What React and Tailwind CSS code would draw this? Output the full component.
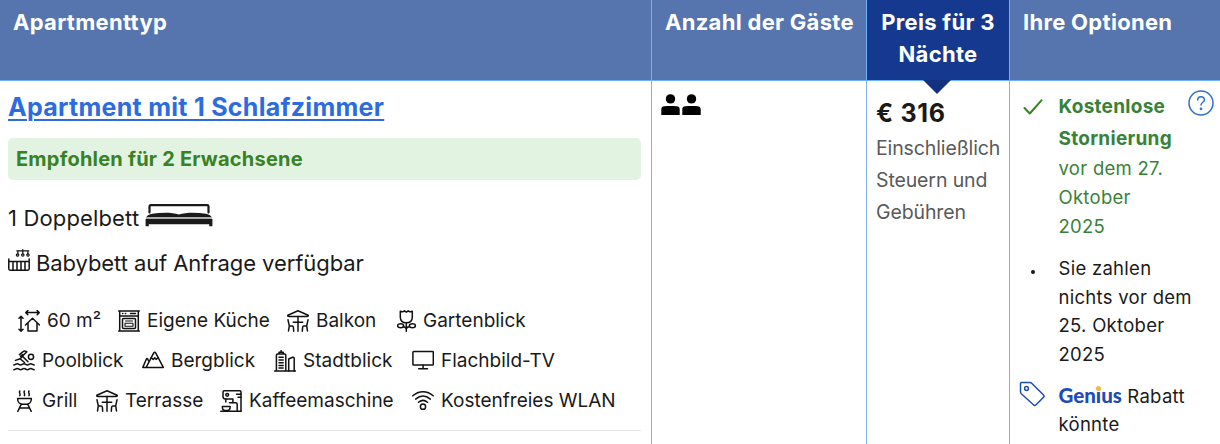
import clsx from 'clsx';

const Icon = ({ children, className }) => (
  <svg
    viewBox="0 0 22 22"
    className={clsx('h-[22px] w-[22px] shrink-0', className)}
    fill="none"
    stroke="#111"
    strokeWidth="1.5"
    strokeLinecap="round"
    strokeLinejoin="round"
  >
    {children}
  </svg>
);

const SizeIcon = () => (
  <Icon>
    <path d="M8 2.500h13M9.800.6l-2 2 2 2M19.200.6l2 2-2 2M3 6.500v14.500M1 8.300l2-2 2 2M1 19.200l2 2 2-2" />
    <path d="M7.500 15l7-6.700 7 6.700M10 13v8h9v-8" />
  </Icon>
);

const KitchenIcon = () => (
  <Icon>
    <path d="M.7.9h20.600M1.700 1v20M20.300 1v20M.7 21.100h20.600M1.700 6h18.600" />
    <path d="M4.600 3.400h.3M7.400 3.400h.3M12.500 3.400h5" />
    <rect x="4.500" y="8.400" width="13" height="10.200" rx="1" />
    <path d="M7.500 11h7M7 13.300h8v3H7z" strokeWidth="1.100" />
  </Icon>
);

const TerraceIcon = () => (
  <Icon>
    <path d="M11 .8L.9 5.200c-.5 1 .2 1.200 1 1.200h18.200c.8 0 1.500-.2 1-1.200z" />
    <path d="M11 6.500v14.700M6.300 12.200h9.400" />
    <path d="M1 9.800l1.300 6.100L1.500 21M2.300 15.900h3c.8 0 1 .7 1.100 1.500l.3 3.800M21 9.800l-1.300 6.100.8 5.100M19.700 15.900h-3c-.8 0-1 .7-1.100 1.500l-.3 3.800" />
  </Icon>
);

const TulipIcon = () => (
  <Icon>
    <path d="M3.300 1.200c1 .7 2 .8 3 .3L7.400.8 9.300 2.200 11.200.8l1.100.7c1 .5 2 .4 3-.3v5.700c0 3.800-2.500 5.800-6 5.800s-6-2-6-5.800zM9.300 12.700v8.600" />
    <ellipse cx="3.600" cy="15.800" rx="3" ry="2" />
    <ellipse cx="15.400" cy="15.800" rx="3" ry="2" />
    <path d="M6.300 16.700c1.500 0 2.400.7 3 2 .6-1.300 1.500-2 3-2" />
  </Icon>
);

const PoolIcon = () => (
  <Icon>
    <circle cx="18" cy="6.800" r="2.600" />
    <path d="M6.500 4.600l3.300-2.700c1-.8 2.200-1 3.300-.5l.8.4-4.600 4.300 5.700 5.600M7.600 6.200l2-1.600M2.500 10.400l4.600-1.700 4.400 3.800M6.800 8.800l1.800-1.500" />
    <path d="M.8 15c1.700 0 1.700-1.300 3.400-1.300S5.900 15 7.600 15s1.700-1.300 3.400-1.300S12.700 15 14.400 15s1.700-1.300 3.400-1.300S19.500 15 21.200 15M.8 19.700c1.700 0 1.700-1.300 3.400-1.300s1.700 1.300 3.400 1.300 1.700-1.300 3.400-1.300 1.700 1.300 3.400 1.300 1.700-1.300 3.400-1.300 1.700 1.300 3.400 1.300" />
  </Icon>
);

const MountainIcon = () => (
  <Icon>
    <path d="M.8 17.400h20.500L13.800 3.100c-.6-1-1.600-1-2.200 0L4.300 17.200M.8 17.400l3.500-8.200c.5-.9 1-.9 1.500 0l.8 1.800" />
    <path d="M9.300 7.800l2 1.600 1.500-1.600 1.300 1.600 1.900-1.600" />
  </Icon>
);

const CityIcon = () => (
  <Icon>
    <path d="M.6 21h20.800M2.400 21V5.300c0-.9.5-1.400 1.300-1.400h6.800c.8 0 1.300.5 1.300 1.400V21M5 3.700V2.300h4.200v1.400M7.100 2V.7" />
    <path d="M14.700 21V9l4-1.700c.9-.3 1.500 0 1.500 1V21" />
    <path d="M5 7.300h4.200M5 10h4.200M5 12.700h4.200M5 15.400h4.200M5 18.100h4.200" />
  </Icon>
);

const TvIcon = () => (
  <Icon>
    <rect x=".9" y="1.500" width="20.400" height="13.500" rx=".8" />
    <path d="M11.100 15.300v3.500M6.700 18.800h8.800" />
  </Icon>
);

const GrillIcon = () => (
  <Icon>
    <path d="M3.800 1c-1.200 1.700 1 2.600 0 4.600M8.400 1c-1.200 1.700 1 2.600 0 4.600M13 1c-1.200 1.700 1 2.600 0 4.600" />
    <path d="M1.600 8.600h13.800c0 3.200-1.900 5.600-4.800 5.600H6.400c-2.900 0-4.800-2.400-4.800-5.600zM5.200 14.300L1.800 21.300M11.800 14.300l3.400 7M3.600 18h9.800" />
  </Icon>
);

const CoffeeIcon = () => (
  <Icon>
    <path d="M21 21.200V2c0-.8-.4-1.200-1.200-1.200H4.200C3.400.8 3 1.200 3 2v4.500c0 1.600.8 2.400 2.300 2.400h7.600v3.600" />
    <circle cx="7.200" cy="4.800" r="1.400" />
    <path d="M16.500 4.200H21M18 7.200h3M.8 21.200H21M9.500 12.700h6.200c1 0 1.500.5 1.500 1.500v7M5.800 9v3" />
    <path d="M2.300 16.600h7.900c0 2.600-1 4-2.900 4H5.200c-1.900 0-2.900-1.400-2.900-4z" />
  </Icon>
);

const WifiIcon = () => (
  <Icon>
    <path d="M.8 5.800c6-5.500 14.400-5.500 20.400 0M3.700 9.100c4.500-4 10.100-4 14.600 0M6.500 12.300c2.900-2.500 6.100-2.500 9 0" />
    <circle cx="11" cy="16.700" r="2.600" />
  </Icon>
);

const BedIcon = () => (
  <svg viewBox="0 0 68 23" className="h-[23px] w-[68px] shrink-0" fill="#1a1a1a">
    <path d="M4.500 8.500V2.400c0-.7.500-1.200 1.200-1.200h56.600c.7 0 1.200.5 1.200 1.200v6.100" fill="none" stroke="#1a1a1a" strokeWidth="2.200" strokeLinecap="round" />
    <path d="M1.300 13.200c.8-1.600 3-2.900 6-3.500 9-1.400 20-1.400 26.700.7 6.700-2.100 17.700-2.100 26.700-.7 3 .6 5.200 1.900 6 3.500z" />
    <path d="M.6 15h66.800v7.200h-3.200v-2H3.800v2H.6z" />
    <path d="M1 14.100h66" stroke="#aaa" strokeWidth="1.600" />
  </svg>
);

const CribIcon = () => (
  <Icon>
    <path d="M.8 10v9.800c0 .9.500 1.400 1.400 1.400h17.600c.9 0 1.400-.5 1.400-1.400V10M.8 12.500h20.400M5 12.500v8.500M9 12.500v8.500M13 12.500v8.500M17 12.500v8.500" />
    <path d="M8.800 1.800h12M14.800.6v4M9.800 2v3M19.900 2v3" strokeWidth="1.200" />
    <circle cx="9.600" cy="6" r="1.200" strokeWidth="1.200" />
    <circle cx="14.800" cy="6" r="1.200" strokeWidth="1.200" />
    <circle cx="20" cy="6" r="1.200" strokeWidth="1.200" />
  </Icon>
);

const Person = () => (
  <svg viewBox="0 0 19 21" className="h-[21px] w-[19px]">
    <circle cx="9.500" cy="4.900" r="4.700" />
    <path d="M.3 21v-5.500c0-2.300 1.200-3 3.100-3.200 4-.5 8.200-.5 12.200 0 1.900.2 3.100.9 3.100 3.200V21z" />
  </svg>
);

const AMENITIES = [
  [
    { icon: SizeIcon, label: '60 m²', width: 'w-[100px]' },
    { icon: KitchenIcon, label: 'Eigene Küche', width: 'w-[169px]' },
    { icon: TerraceIcon, label: 'Balkon', width: 'w-[110px]' },
    { icon: TulipIcon, label: 'Gartenblick', width: 'w-[140px]', gap: 'gap-[4px]' },
  ],
  [
    { icon: PoolIcon, label: 'Poolblick', width: 'w-[129px]' },
    { icon: MountainIcon, label: 'Bergblick', width: 'w-[132px]' },
    { icon: CityIcon, label: 'Stadtblick', width: 'w-[138px]' },
    { icon: TvIcon, label: 'Flachbild-TV', width: 'w-[150px]' },
  ],
  [
    { icon: GrillIcon, label: 'Grill', width: 'w-[80px]', gap: 'gap-[4px]' },
    { icon: TerraceIcon, label: 'Terrasse', width: 'w-[124px]' },
    { icon: CoffeeIcon, label: 'Kaffeemaschine', width: 'w-[192px]' },
    { icon: WifiIcon, label: 'Kostenfreies WLAN', width: 'w-[210px]' },
  ],
];

const ROW_INDENT = ['pl-[10px]', 'pl-[5px]', 'pl-[8px]'];

const HeaderCell = ({ children, className }) => (
  <div
    className={clsx(
      'h-[81px] border-b border-[#6cb2f9] pt-[6px] text-[22px] leading-8 font-bold tracking-[0.3px] whitespace-nowrap text-white',
      className
    )}
  >
    {children}
  </div>
);

const RoomCell = () => (
  <div className="border-r border-[#80b2ee] pr-[10px] pl-2">
    <div className="pt-[9px] text-[25px] leading-[34px] font-bold tracking-[0.28px] text-[#2d6be0]">
      <a href="#" className="underline decoration-2 underline-offset-[3px]">
        Apartment mit 1 Schlafzimmer
      </a>
    </div>
    <div className="mt-[14px] h-[42px] rounded-[5px] bg-[#e2f3e1] pl-2 text-[20px] leading-[42px] font-bold tracking-[0.22px] text-[#388225]">
      Empfohlen für 2 Erwachsene
    </div>
    <div className="mt-[22px] flex h-8 items-center text-[22px] text-[#1a1a1a]">
      <span className="w-[137px] tracking-[0.15px] whitespace-nowrap">1 Doppelbett</span>
      <span className="-mt-[5px]">
        <BedIcon />
      </span>
    </div>
    <div className="mt-[13px] flex h-8 items-center gap-[6px] text-[22px] text-[#1a1a1a]">
      <span className="-mt-[6px]">
        <CribIcon />
      </span>
      <span className="tracking-[-0.08px]">Babybett auf Anfrage verfügbar</span>
    </div>
    <div className="mt-[22px] border-b border-[#e4e4e4] pb-[9px]">
      {AMENITIES.map((row, i) => (
        <div key={i} className={clsx('flex h-10 items-center', ROW_INDENT[i])}>
          {row.map(({ icon: Glyph, label, width, gap = 'gap-[7px]' }) => (
            <div
              key={label}
              className={clsx('flex shrink-0 items-center text-[19px] whitespace-nowrap text-[#1a1a1a]', width, gap)}
            >
              <Glyph />
              <span>{label}</span>
            </div>
          ))}
        </div>
      ))}
    </div>
  </div>
);

const PriceCell = () => (
  <div className="relative border-r border-[#80b2ee] pt-[16px] pl-[9px]">
    <svg viewBox="0 0 28 14" className="absolute -top-px left-[56px] h-[14px] w-[28px]">
      <path d="M0 0h28L14 14z" fill="#13317e" />
    </svg>
    <div className="text-[25px] leading-8 font-bold tracking-[0.7px] text-[#1a1a1a]">€ 316</div>
    <div className="mt-[3px] text-[19.5px] leading-8 tracking-[-0.12px] text-[#595959]">
      Einschließlich
      <br />
      Steuern und
      <br />
      Gebühren
    </div>
  </div>
);

const OptionsCell = () => (
  <div className="pl-[10px] text-[18.5px] leading-[29px] tracking-[0.28px]">
    <div className="flex pt-[9px] text-[#388238]">
      <svg viewBox="0 0 20 16" className="mt-[9px] ml-[3px] h-4 w-5 shrink-0" fill="none" stroke="#388225" strokeWidth="2" strokeLinecap="round" strokeLinejoin="round">
        <path d="M1.500 9l5.300 5.500L18.500 1.300" />
      </svg>
      <div className="ml-[15.5px] w-[129px]">
        <div className="relative top-px text-[19px] leading-8 font-bold whitespace-nowrap">
          Kostenlose
          <br />
          Stornierung
        </div>
        vor dem 27.
        <br />
        Oktober
        <br />
        2025
      </div>
      <svg viewBox="0 0 26 26" className="h-[26px] w-[26px] shrink-0" fill="none" stroke="#2f6fc4" strokeWidth="1.500" strokeLinecap="round">
        <circle cx="13" cy="13" r="12" />
        <path d="M9.700 10c0-2 1.400-3.300 3.300-3.300s3.400 1.300 3.400 3.200c0 2.300-3.400 2.400-3.400 5.100" />
        <circle cx="13" cy="18.800" r=".6" fill="#2f6fc4" />
      </svg>
    </div>
    <div className="mt-[13px] flex text-[#1a1a1a]">
      <span className="mt-[16px] ml-[11px] h-[4px] w-[4px] shrink-0 rounded-full bg-[#1a1a1a]" />
      <div className="ml-[23.5px] leading-[28.7px] whitespace-nowrap">
        Sie zahlen
        <br />
        nichts vor dem
        <br />
        25. Oktober
        <br />
        2025
      </div>
    </div>
    <div className="mt-[12px] flex text-[#1a1a1a]">
      <svg viewBox="0 0 26 26" className="-ml-px h-[26px] w-[26px] shrink-0" fill="none" stroke="#1d4db5" strokeWidth="1.500" strokeLinejoin="round">
        <path d="M2.500 1.500h8.300c.8 0 1.300.2 1.900.8l11.600 11.500c1 1 1 1.700 0 2.600l-7.200 7.400c-.9.900-1.700.9-2.600 0L2.300 12.700c-.6-.6-.8-1.100-.8-1.900V2.500c0-.7.300-1 1-1z" />
        <circle cx="7.500" cy="7.500" r="1.900" />
      </svg>
      <div className="ml-[13.5px] leading-[28px] whitespace-nowrap">
        <span className="relative font-['Lato'] text-[20.5px] font-black tracking-[0px] text-[#1d4db5]">
          Genius
          <span className="absolute top-[3px] left-[37.5px] h-[5px] w-[5px] rounded-full bg-[#f8b83c]" />
        </span>{' '}
        Rabatt
        <br />
        könnte
      </div>
    </div>
  </div>
);

const App = () => (
  <div className="grid h-[444px] w-[1220px] grid-cols-[652px_215px_143px_210px] grid-rows-[81px_363px] overflow-hidden bg-white font-['Inter',sans-serif]">
    <HeaderCell className="border-r bg-[#5675ae] pl-[13px]">Apartmenttyp</HeaderCell>
    <HeaderCell className="border-r bg-[#5675ae] pl-[13px]">Anzahl der Gäste</HeaderCell>
    <HeaderCell className="border-r bg-[#15398f] text-center">
      Preis für 3
      <br />
      Nächte
    </HeaderCell>
    <HeaderCell className="bg-[#5675ae] pl-[13px]">Ihre Optionen</HeaderCell>

    <RoomCell />
    <div className="flex gap-[2px] border-r border-[#80b2ee] pt-[13px] pl-[9px]">
      <Person />
      <Person />
    </div>
    <PriceCell />
    <OptionsCell />
  </div>
);

export default App;
